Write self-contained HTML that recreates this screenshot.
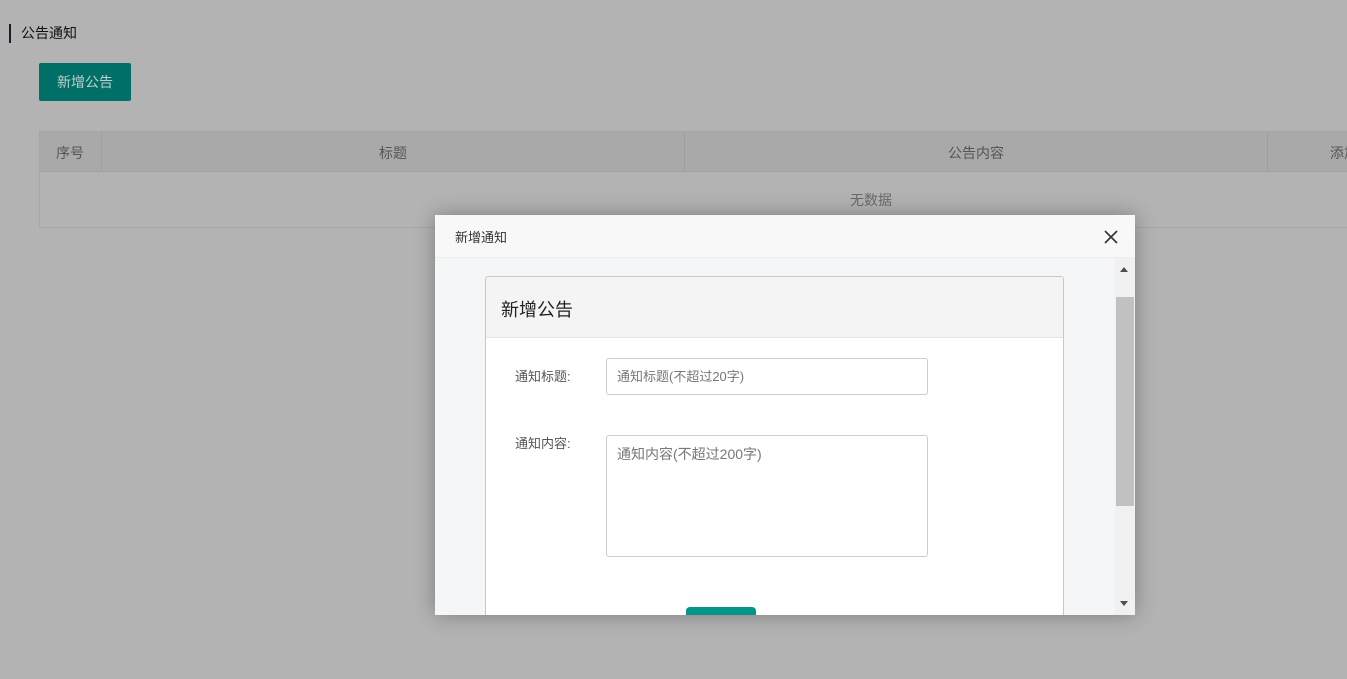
<!DOCTYPE html>
<html><head><meta charset="utf-8"><style>
*{margin:0;padding:0;box-sizing:border-box}
body{width:1347px;height:679px;overflow:hidden;background:#b3b3b3;font-family:"Liberation Sans","Noto Sans CJK SC",sans-serif;position:relative}
.a{position:absolute;white-space:nowrap}
</style></head><body>
<div class="a" style="left:9px;top:24px;width:2px;height:19px;background:#1c1c2a"></div>
<div class="a" style="left:21px;top:25px;font-size:14px;color:#111;line-height:17px">公告通知</div>
<div class="a" style="left:39px;top:63px;width:92px;height:38px;background:#006f68;border-radius:2px;color:#bfcfcc;font-size:14px;line-height:38px;text-align:center">新增公告</div>
<div class="a" style="left:39px;top:131px;width:1320px;height:97px;border:1px solid #a6a6a6"></div>
<div class="a" style="left:40px;top:132px;width:1310px;height:40px;background:#a9a9a9;border-bottom:1px solid #a0a0a0"></div>
<div class="a" style="left:101px;top:132px;width:1px;height:40px;background:#a0a0a0"></div>
<div class="a" style="left:684px;top:132px;width:1px;height:40px;background:#a0a0a0"></div>
<div class="a" style="left:1267px;top:132px;width:1px;height:40px;background:#a0a0a0"></div>
<div class="a" style="left:56px;top:143px;font-size:14px;color:#555">序号</div>
<div class="a" style="left:379px;top:143px;font-size:14px;color:#555">标题</div>
<div class="a" style="left:948px;top:143px;font-size:14px;color:#555">公告内容</div>
<div class="a" style="left:1330px;top:143px;font-size:14px;color:#555">添加</div>
<div class="a" style="left:850px;top:190px;font-size:14px;color:#6a6a6a">无数据</div>

<div class="a" style="left:435px;top:215px;width:700px;height:400px;background:#f5f6f8;box-shadow:0 0 20px rgba(0,0,0,.3);overflow:hidden">
 <div class="a" style="left:0;top:0;width:700px;height:43px;background:#f8f8f8;border-bottom:1px solid #eee"></div>
 <div class="a" style="left:20px;top:12px;font-size:13px;color:#333">新增通知</div>
 <svg class="a" style="left:669px;top:15px" width="14" height="14"><path d="M1 1L13 13M13 1L1 13" stroke="#333" stroke-width="1.6"/></svg>
 <div class="a" style="left:680px;top:43px;width:20px;height:357px;background:#f1f1f1"></div>
 <div class="a" style="left:681px;top:82px;width:18px;height:209px;background:#c1c1c1"></div>
 <svg class="a" style="left:684px;top:51px" width="10" height="7"><path d="M1 6L5 1L9 6Z" fill="#505050"/></svg>
 <svg class="a" style="left:684px;top:385px" width="10" height="7"><path d="M1 1L5 6L9 1Z" fill="#505050"/></svg>
 <div class="a" style="left:50px;top:61px;width:579px;height:360px;background:#fff;border:1px solid #c8c8c8;border-radius:3px;overflow:hidden">
  <div class="a" style="left:0;top:0;width:577px;height:61px;background:#f4f4f4;border-bottom:1px solid #e4e4e4"></div>
  <div class="a" style="left:15px;top:19px;font-size:18px;color:#222">新增公告</div>
  <div class="a" style="left:29px;top:89px;font-size:13px;color:#555">通知标题:</div>
  <div class="a" style="left:120px;top:81px;width:322px;height:37px;border:1px solid #ccc;border-radius:3px"></div>
  <div class="a" style="left:131px;top:89px;font-size:13px;color:#777">通知标题(不超过20字)</div>
  <div class="a" style="left:29px;top:156px;font-size:13px;color:#555">通知内容:</div>
  <div class="a" style="left:120px;top:158px;width:322px;height:122px;border:1px solid #ccc;border-radius:3px"></div>
  <div class="a" style="left:131px;top:167px;font-size:14px;color:#777">通知内容(不超过200字)</div>
  <div class="a" style="left:200px;top:330px;width:70px;height:30px;background:#009688;border-radius:4px"></div>
 </div>
</div>
</body></html>
